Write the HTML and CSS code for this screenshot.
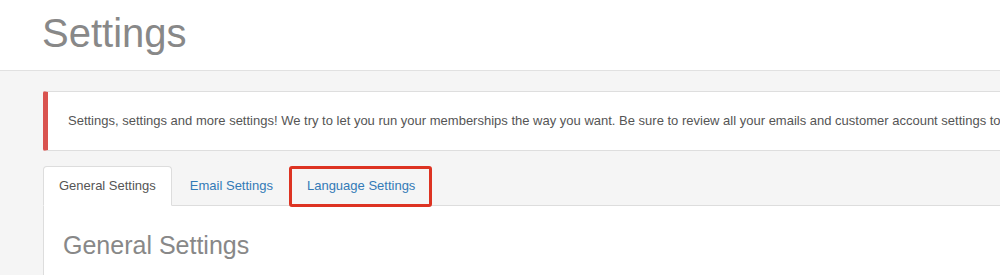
FILE: index.html
```html
<!DOCTYPE html>
<html>
<head>
<meta charset="utf-8">
<link rel="stylesheet" href="styles.css">
</head>
<body>
<header class="page-header">
  <h1 class="page-title">Settings</h1>
</header>
<main class="content">
  <div class="notice">Settings, settings and more settings! We try to let you run your memberships the way you want. Be sure to review all your emails and customer account settings to make sure everything is set up the way you like.</div>
  <ul class="tabs">
    <li class="tab active"><a href="#">General Settings</a></li>
    <li class="tab"><a href="#">Email Settings</a></li>
    <li class="tab highlighted"><a href="#">Language Settings</a></li>
  </ul>
  <section class="panel">
    <h2 class="panel-title">General Settings</h2>
  </section>
</main>
</body>
</html>
```
FILE: styles.css
```css
html, body {
  margin: 0;
  padding: 0;
  overflow: hidden;
  background: #f5f5f5;
  font-family: "Liberation Sans", Arial, sans-serif;
}
.page-header {
  background: #fff;
  height: 71px;
  box-sizing: border-box;
  border-bottom: 1px solid #e1e1e1;
  padding: 11px 0 0 42px;
}
.page-title {
  margin: 0;
  font-size: 40px;
  line-height: 44px;
  font-weight: normal;
  color: #888;
}
.content {
  width: 1400px;
  padding: 20px 0 0 43px;
}
.notice {
  background: #fff;
  border: 1px solid #dedede;
  border-left: 5px solid #d9534f;
  border-radius: 2px;
  padding: 20px 20px;
  font-size: 13px;
  line-height: 18px;
  color: #555;
  white-space: nowrap;
}
.tabs {
  list-style: none;
  margin: 15px 0 0 0;
  padding: 0;
  display: flex;
  border-bottom: 1px solid #ddd;
}
.tab {
  margin: 0 2px -1px 0;
  position: relative;
}
.tab a {
  display: block;
  padding: 10px 15px;
  font-size: 13px;
  line-height: 18px;
  color: #337ab7;
  text-decoration: none;
  border: 1px solid transparent;
  border-radius: 4px 4px 0 0;
}
.tab.active a {
  color: #555;
  background: #fff;
  border-color: #ddd #ddd transparent #ddd;
}
.tab.highlighted::after {
  content: "";
  position: absolute;
  top: 0;
  left: -2px;
  right: -1px;
  bottom: -1px;
  border: 3px solid #dd3322;
  border-radius: 3px;
  pointer-events: none;
}
.panel {
  background: #fff;
  border-left: 1px solid #ddd;
  padding: 26px 20px 40px 19px;
}
.panel-title {
  margin: 0;
  font-size: 25px;
  line-height: 27px;
  font-weight: normal;
  color: #888;
}
```
